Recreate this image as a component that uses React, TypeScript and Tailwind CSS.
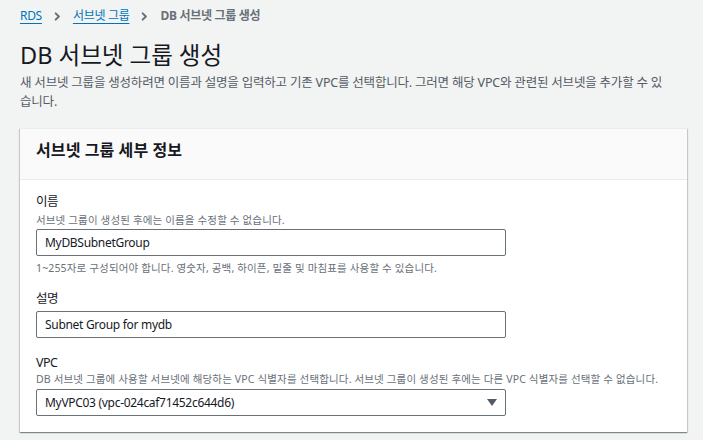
import React from 'react';

const font = "[font-family:'Noto_Sans','Noto_Sans_CJK_KR',sans-serif]";

function Chevron() {
  return (
    <svg className="h-[9px] w-[9px] text-[#687078]" viewBox="0 0 10 10" fill="none" stroke="currentColor" strokeWidth={2.2}>
      <path d="M3 1.5l3.5 3.5L3 8.5" strokeLinecap="round" strokeLinejoin="round" />
    </svg>
  );
}

function TextInput({ value }: { value: string }) {
  return (
    <div className="flex h-[27px] w-[470px] items-center rounded-[2px] border border-[#687078] bg-white pl-2 text-[12px] tracking-[-0.3px] text-[#16191f]">
      {value}
    </div>
  );
}

export default function App() {
  return (
    <div className={`min-h-[440px] w-full bg-[#f2f3f3] pl-5 pr-4 pt-[6px] text-[#16191f] ${font}`}>
      {/* Breadcrumb */}
      <nav className="flex items-center text-[12px] leading-5">
        <span className="text-[#0073bb] underline underline-offset-[3px] tracking-[-0.3px]">RDS</span>
        <span className="mx-[11px] flex items-center"><Chevron /></span>
        <span className="text-[#0073bb] underline underline-offset-[3px] tracking-[-0.3px]">서브넷 그룹</span>
        <span className="mx-[11px] flex items-center"><Chevron /></span>
        <span className="font-bold text-[#687078] tracking-[-0.3px]">DB 서브넷 그룹 생성</span>
      </nav>

      {/* Page header */}
      <h1 className="mt-[13px] text-[23.5px] font-normal leading-[32px]">DB 서브넷 그룹 생성</h1>
      <p className="mt-[2px] whitespace-nowrap text-[12.5px] leading-[19px] tracking-[-0.2px] text-[#545b64]">
        새 서브넷 그룹을 생성하려면 이름과 설명을 입력하고 기존 VPC를 선택합니다. 그러면 해당 VPC와 관련된 서브넷을 추가할 수 있
        <br />
        습니다.
      </p>

      {/* Card */}
      <section className="mt-[17px] border-t border-[#eaeded] bg-white shadow-[0_1px_1px_0_rgba(0,28,36,0.3),1px_1px_1px_0_rgba(0,28,36,0.15),-1px_1px_1px_0_rgba(0,28,36,0.15)]">
        <div className="border-b border-[#eaeded] bg-[#fafafa] px-4 pb-[18px] pt-[10px]">
          <h2 className="text-[16px] font-bold leading-[22px] tracking-[0.1px]">서브넷 그룹 세부 정보</h2>
        </div>

        <div className="px-4 pb-4 pt-[13px]">
          {/* 이름 */}
          <div>
            <label className="block text-[12.5px] leading-[18px] tracking-[-0.5px]">이름</label>
            <p className="mt-px text-[10.5px] leading-4 tracking-[0.15px] text-[#687078]">
              서브넷 그룹이 생성된 후에는 이름을 수정할 수 없습니다.
            </p>
            <div className="mt-px">
              <TextInput value="MyDBSubnetGroup" />
            </div>
            <p className="mt-[4px] text-[10.5px] leading-4 tracking-[0.15px] text-[#687078]">
              1~255자로 구성되어야 합니다. 영숫자, 공백, 하이픈, 밑줄 및 마침표를 사용할 수 있습니다.
            </p>
          </div>

          {/* 설명 */}
          <div className="mt-[14px]">
            <label className="block text-[12.5px] leading-[18px] tracking-[-0.5px]">설명</label>
            <div className="mt-[3px]">
              <TextInput value="Subnet Group for mydb" />
            </div>
          </div>

          {/* VPC */}
          <div className="mt-[16px]">
            <label className="block text-[12.5px] leading-[17px] tracking-[-0.5px]">VPC</label>
            <p className="text-[10.5px] leading-4 tracking-[0.15px] text-[#687078]">
              DB 서브넷 그룹에 사용할 서브넷에 해당하는 VPC 식별자를 선택합니다. 서브넷 그룹이 생성된 후에는 다른 VPC 식별자를 선택할 수 없습니다.
            </p>
            <div className="mt-[2px] flex h-[27px] w-[470px] items-center justify-between rounded-[2px] border border-[#687078] bg-white pl-2 pr-[8px] text-[12px] tracking-[-0.3px] text-[#16191f]">
              <span>MyVPC03 (vpc-024caf71452c644d6)</span>
              <svg className="h-[7px] w-[10px] text-[#545b64]" viewBox="0 0 10 7" fill="currentColor">
                <path d="M0 0h10L5 7z" />
              </svg>
            </div>
          </div>
        </div>
      </section>
    </div>
  );
}
